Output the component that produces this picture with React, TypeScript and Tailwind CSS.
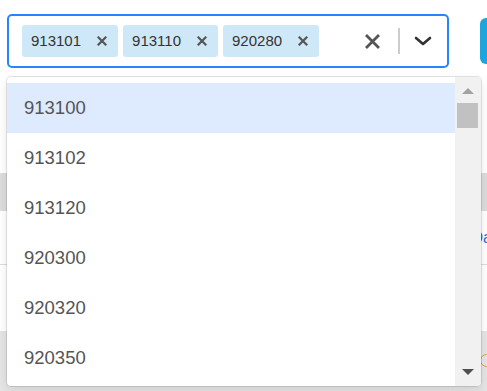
import React from "react";

const chips = ["913101", "913110", "920280"];
const options = ["913100", "913102", "913120", "920300", "920320", "920350"];

function SmallX() {
  return (
    <svg width="10" height="10" viewBox="0 0 10 10">
      <path d="M1.5 1.5 L8.5 8.5 M8.5 1.5 L1.5 8.5" stroke="#555" strokeWidth="2.2" strokeLinecap="square" />
    </svg>
  );
}

export default function App() {
  return (
    <div
      className="relative w-[487px] h-[391px] overflow-hidden bg-white"
      style={{ fontFamily: '"Liberation Sans", Arial, sans-serif' }}
    >
      {/* top bar */}
      <div className="flex items-start pt-[14px] pl-[7px] h-[173px] overflow-hidden">
        <div className="flex shrink-0 items-center w-[442px] h-[54px] rounded-[5px] border-2 border-[#2684ff] pl-[13px]">
          <div className="flex flex-1 gap-[5px]">
            {chips.map((c) => (
              <div
                key={c}
                className="flex items-center h-[32px] rounded-[3px] bg-[#cfe8f7] pl-[9px] pr-[11px] text-[15px] text-[#333]"
              >
                <span>{c}</span>
                <span className="ml-[16px] flex items-center">
                  <SmallX />
                </span>
              </div>
            ))}
          </div>
          <div className="flex items-center h-full">
            <svg width="15" height="15" viewBox="0 0 15 15" className="mr-[18px]">
              <path d="M2 2 L13 13 M13 2 L2 13" stroke="#555" strokeWidth="2.8" strokeLinecap="square" />
            </svg>
            <div className="w-[2px] h-[26px] bg-[#cccccc]" />
            <svg width="18" height="10" viewBox="0 0 18 10" className="ml-[14px] mr-[15px]">
              <path d="M2 2 L9 8 L16 2" stroke="#333" strokeWidth="2.6" fill="none" strokeLinecap="round" strokeLinejoin="round" />
            </svg>
          </div>
        </div>
        <div className="shrink-0 ml-[31px] mt-[4px] w-[20px] h-[46px] rounded-[6px] bg-[#1fa5dc]" />
      </div>
      {/* background table */}
      <div className="h-[38px] bg-[#dcdcdc]" />
      <div className="flex items-center justify-end h-[54px] bg-white border-b border-[#dddddd] text-[16px] text-[#2a6fdb] overflow-hidden">
        <span className="mr-[-5px]">Da</span>
      </div>
      <div className="h-[66px] bg-white" />
      <div className="relative h-[60px] bg-[#e5e5e5]">
        <div className="absolute right-[-6px] top-[23px] w-[13px] h-[13px] rounded-full border-[1.5px] border-[#e0a030]" />
      </div>

      {/* dropdown menu */}
      <div className="absolute left-[7px] top-[77px] w-[474px] h-[309px] flex bg-white rounded-[4px] overflow-hidden shadow-[0_0_0_1px_rgba(0,0,0,0.1),0_4px_11px_rgba(0,0,0,0.1)]">
        <div className="flex-1 pt-[6px] overflow-hidden">
          {options.map((o, i) => (
            <div
              key={o}
              className={`flex items-center h-[50px] pl-[17px] text-[18.5px] text-[#555] ${i === 0 ? "bg-[#deebff]" : "bg-white"}`}
            >
              {o}
            </div>
          ))}
        </div>
        <div className="relative w-[26px] h-full bg-[#f1f1f1]">
          <svg width="12" height="6" viewBox="0 0 12 6" className="absolute left-[7px] top-[11px]">
            <path d="M0 6 L6 0 L12 6 Z" fill="#a3a3a3" />
          </svg>
          <div className="absolute left-[2px] top-[26px] w-[21px] h-[25px] bg-[#c1c1c1]" />
          <svg width="12" height="6" viewBox="0 0 12 6" className="absolute left-[7px] bottom-[11px]">
            <path d="M0 0 L12 0 L6 6 Z" fill="#505050" />
          </svg>
        </div>
      </div>
    </div>
  );
}
